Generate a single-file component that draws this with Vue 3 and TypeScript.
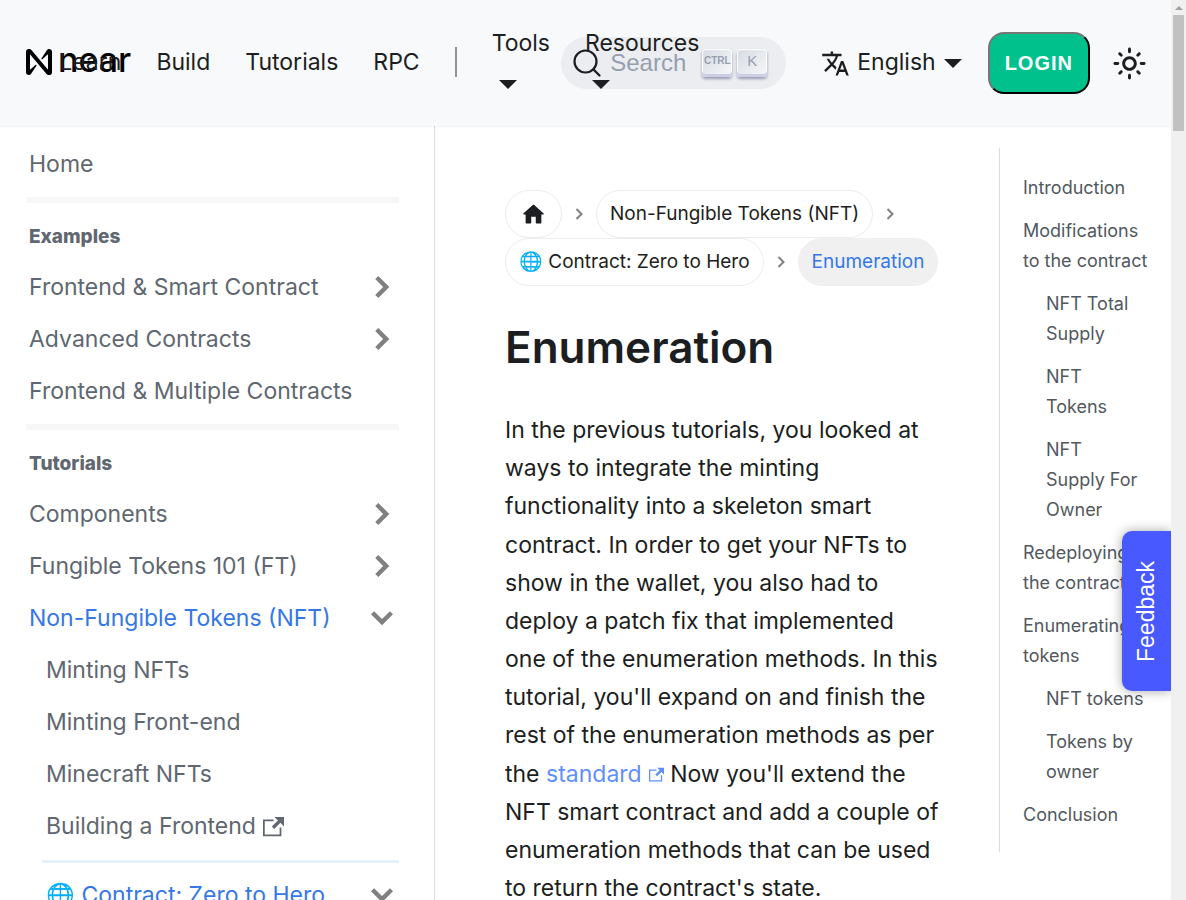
<script setup lang="ts">
interface SideItem {
  kind: 'link' | 'heading' | 'divider' | 'subdivider'
  label?: string
  icon?: 'right' | 'down' | 'external'
  active?: boolean
  nested?: boolean
}

interface TocItem {
  label: string
  nested?: boolean
}

const navLinks: string[] = ['Learn', 'Build', 'Tutorials', 'RPC']
const navMenus: string[] = ['Tools', 'Resources']

const sideItems: SideItem[] = [
  { kind: 'link', label: 'Home' },
  { kind: 'divider' },
  { kind: 'heading', label: 'Examples' },
  { kind: 'link', label: 'Frontend & Smart Contract', icon: 'right' },
  { kind: 'link', label: 'Advanced Contracts', icon: 'right' },
  { kind: 'link', label: 'Frontend & Multiple Contracts' },
  { kind: 'divider' },
  { kind: 'heading', label: 'Tutorials' },
  { kind: 'link', label: 'Components', icon: 'right' },
  { kind: 'link', label: 'Fungible Tokens 101 (FT)', icon: 'right' },
  { kind: 'link', label: 'Non-Fungible Tokens (NFT)', icon: 'down', active: true },
  { kind: 'link', label: 'Minting NFTs', nested: true },
  { kind: 'link', label: 'Minting Front-end', nested: true },
  { kind: 'link', label: 'Minecraft NFTs', nested: true },
  { kind: 'link', label: 'Building a Frontend', icon: 'external', nested: true },
  { kind: 'subdivider' },
  { kind: 'link', label: '🌐 Contract: Zero to Hero', icon: 'down', active: true, nested: true },
]

const tocItems: TocItem[] = [
  { label: 'Introduction' },
  { label: 'Modifications\nto the contract' },
  { label: 'NFT Total\nSupply', nested: true },
  { label: 'NFT\nTokens', nested: true },
  { label: 'NFT\nSupply For\nOwner', nested: true },
  { label: 'Redeploying\nthe contract' },
  { label: 'Enumerating\ntokens' },
  { label: 'NFT tokens', nested: true },
  { label: 'Tokens by\nowner', nested: true },
  { label: 'Conclusion' },
]
</script>

<template>
  <div class="window">
    <div class="page">
      <header class="navbar">
        <nav class="nav-left" aria-label="Main">
          <a class="brand" href="#">
            <svg class="brand-mark" viewBox="0 0 90 90" aria-hidden="true">
              <path d="M72.2 4.6L53.4 32.5c-1.300 1.900 1.200 4.200 3 2.600L74.900 19c.5-.4 1.200-.1 1.200.6v50.300c0 .7-.9 1-1.300.5l-56-67C17 1.200 14.400 0 11.500 0h-2C4.300 0 0 4.300 0 9.600v70.800C0 85.700 4.300 90 9.600 90c3.300 0 6.400-1.700 8.200-4.600l18.800-27.900c1.300-1.900-1.200-4.200-3-2.600L15.100 70.900c-.5.4-1.200.1-1.200-.6V20.100c0-.7.9-1 1.300-.5l56 67c1.800 2.200 4.500 3.400 7.300 3.400h2c5.300 0 9.600-4.300 9.600-9.600V9.600C90 4.300 85.700 0 80.400 0 77.100 0 74 1.700 72.200 4.600z" />
            </svg>
            <span class="brand-name">near</span>
          </a>
          <a v-for="link in navLinks" :key="link" class="nav-link" href="#">{{ link }}</a>
          <span class="nav-rule"></span>
          <a v-for="menu in navMenus" :key="menu" class="nav-menu" href="#">
            <span>{{ menu }}</span>
            <span class="caret-row"><span class="caret"></span></span>
          </a>
        </nav>
        <div class="nav-right">
          <button class="search" type="button">
            <svg class="search-icon" viewBox="0 0 28 28" aria-hidden="true">
              <circle cx="12.5" cy="12.5" r="11" fill="none" stroke="#1c1e21" stroke-width="2.2" />
              <path d="M20.4 20.4L26.5 26.5" stroke="#1c1e21" stroke-width="2.2" stroke-linecap="round" />
            </svg>
            <span class="search-label">Search</span>
            <kbd class="key key-ctrl">CTRL</kbd>
            <kbd class="key">K</kbd>
          </button>
          <a class="language" href="#">
            <svg class="lang-icon" viewBox="0 0 24 24" aria-hidden="true">
              <path fill="currentColor" d="M12.87 15.07l-2.54-2.51.03-.03c1.74-1.94 2.98-4.17 3.71-6.53H17V4h-7V2H8v2H1v1.99h11.17C11.5 7.92 10.44 9.75 9 11.35 8.07 10.32 7.3 9.19 6.69 8h-2c.73 1.63 1.73 3.17 2.98 4.56l-5.09 5.02L4 19l5-5 3.11 3.11.76-2.04zM18.5 10h-2L12 22h2l1.12-3h4.75L21 22h2l-4.5-12zm-2.62 7l1.62-4.33L19.12 17h-3.24z" />
            </svg>
            <span class="language-name">English</span>
            <span class="caret"></span>
          </a>
          <button class="login" type="button">LOGIN</button>
          <button class="theme" type="button" aria-label="Switch theme">
            <svg viewBox="0 0 24 24" aria-hidden="true">
              <path fill="currentColor" d="M12,9c1.65,0,3,1.35,3,3s-1.35,3-3,3s-3-1.35-3-3S10.35,9,12,9 M12,7c-2.76,0-5,2.24-5,5s2.24,5,5,5s5-2.24,5-5 S14.76,7,12,7L12,7z M2,13l2,0c0.55,0,1-0.45,1-1s-0.45-1-1-1l-2,0c-0.55,0-1,0.45-1,1S1.45,13,2,13z M20,13l2,0c0.55,0,1-0.45,1-1 s-0.45-1-1-1l-2,0c-0.55,0-1,0.45-1,1S19.45,13,20,13z M11,2v2c0,0.55,0.45,1,1,1s1-0.45,1-1V2c0-0.55-0.45-1-1-1S11,1.45,11,2z M11,20v2c0,0.55,0.45,1,1,1s1-0.45,1-1v-2c0-0.55-0.45-1-1-1C11.45,19,11,19.45,11,20z M5.99,4.58c-0.39-0.39-1.03-0.39-1.41,0 c-0.39,0.39-0.39,1.03,0,1.41l1.06,1.06c0.39,0.39,1.03,0.39,1.41,0s0.39-1.03,0-1.41L5.99,4.58z M18.36,16.95 c-0.39-0.39-1.03-0.39-1.41,0c-0.39,0.39-0.39,1.03,0,1.41l1.06,1.06c0.39,0.39,1.03,0.39,1.41,0c0.39-0.39,0.39-1.03,0-1.41 L18.36,16.95z M19.42,5.99c0.39-0.39,0.39-1.03,0-1.41c-0.39-0.39-1.03-0.39-1.41,0l-1.06,1.06c-0.39,0.39-0.39,1.03,0,1.41 s1.03,0.39,1.41,0L19.42,5.99z M7.05,18.36c0.39-0.39,0.39-1.03,0-1.41c-0.39-0.39-1.03-0.39-1.41,0l-1.06,1.06 c-0.39,0.39-0.39,1.03,0,1.41s1.03,0.39,1.41,0L7.05,18.36z" />
            </svg>
          </button>
        </div>
      </header>

      <div class="body">
        <aside class="sidebar">
          <template v-for="(item, index) in sideItems" :key="index">
            <hr v-if="item.kind === 'divider'" class="divider" />
            <hr v-else-if="item.kind === 'subdivider'" class="divider sub" />
            <div v-else-if="item.kind === 'heading'" class="side-heading">{{ item.label }}</div>
            <a v-else class="side-link" :class="{ active: item.active, nested: item.nested }" href="#">
              <span>{{ item.label }}</span>
              <svg v-if="item.icon === 'external'" class="external" viewBox="0 0 24 24" aria-hidden="true">
                <path fill="currentColor" d="M21 13v10h-21v-19h12v2h-10v15h17v-8h2zm3-12h-10.988l4.035 4-6.977 7.07 2.828 2.828 6.977-7.07 4.125 4.172v-11z" />
              </svg>
              <svg v-else-if="item.icon" class="chevron" :class="item.icon" viewBox="0 0 24 24" aria-hidden="true">
                <path fill="#808080" d="M8.300 16.300L12.600 12 8.300 7.700 10 6l6 6-6 6z" />
              </svg>
            </a>
          </template>
        </aside>

        <main class="content">
          <nav class="crumbs" aria-label="Breadcrumbs">
            <a class="crumb" href="#" aria-label="Home page">
              <svg class="home-icon" viewBox="0 0 24 24" aria-hidden="true">
                <path fill="currentColor" d="M10 19v-5h4v5c0 .55.45 1 1 1h3c.55 0 1-.45 1-1v-7h1.700c.46 0 .68-.57.33-.87L12.670 3.600c-.38-.34-.96-.34-1.340 0l-8.360 7.530c-.34.3-.13.87.33.87H5v7c0 .55.45 1 1 1h3c.55 0 1-.45 1-1z" />
              </svg>
            </a>
            <svg class="crumb-sep" viewBox="0 0 12 12" aria-hidden="true"><path d="M3.500 1L8.500 6L3.500 11" /></svg>
            <a class="crumb" href="#">Non-Fungible Tokens (NFT)</a>
            <svg class="crumb-sep" viewBox="0 0 12 12" aria-hidden="true"><path d="M3.500 1L8.500 6L3.500 11" /></svg>
            <a class="crumb" href="#">🌐 Contract: Zero to Hero</a>
            <svg class="crumb-sep" viewBox="0 0 12 12" aria-hidden="true"><path d="M3.500 1L8.500 6L3.500 11" /></svg>
            <span class="crumb current">Enumeration</span>
          </nav>
          <h1>Enumeration</h1>
          <p>
            In the previous tutorials, you looked at ways to integrate the minting functionality into a
            skeleton smart contract. In order to get your NFTs to show in the wallet, you also had to deploy
            a patch fix that implemented one of the enumeration methods. In this tutorial, you'll expand on
            and finish the rest of the enumeration methods as per the
            <a class="text-link" href="#">standard<svg class="link-icon" viewBox="0 0 24 24" aria-hidden="true"><path fill="currentColor" d="M21 13v10h-21v-19h12v2h-10v15h17v-8h2zm3-12h-10.988l4.035 4-6.977 7.07 2.828 2.828 6.977-7.07 4.125 4.172v-11z" /></svg></a>
            Now you'll extend the NFT smart contract and add a couple of enumeration methods that can be
            used to return the contract's state.
          </p>
        </main>

        <nav class="toc" aria-label="On this page">
          <ul>
            <li v-for="item in tocItems" :key="item.label" :class="{ nested: item.nested }">
              <a href="#">{{ item.label }}</a>
            </li>
          </ul>
        </nav>
      </div>

      <button class="feedback" type="button">Feedback</button>
    </div>

    <div class="scrollbar" aria-hidden="true">
      <span class="scroll-arrow"></span>
      <span class="scroll-thumb"></span>
    </div>
  </div>
</template>

<style>
html,
body {
  margin: 0;
  overflow: hidden;
}
</style>

<style scoped>
* {
  box-sizing: border-box;
}

.window {
  display: flex;
  height: 100vh;
  overflow: hidden;
  font-family: Inter, "Noto Sans", sans-serif;
  font-size: 23px;
  line-height: 38px;
  color: #1c1e21;
  background: #fff;
}

a {
  color: inherit;
  text-decoration: none;
}

button {
  font-family: inherit;
  color: inherit;
  cursor: pointer;
}

svg {
  display: block;
  flex: none;
}

.page {
  position: relative;
  flex: 1;
  min-width: 0;
  display: flex;
  flex-direction: column;
}

.navbar {
  flex: none;
  position: relative;
  z-index: 2;
  display: flex;
  align-items: center;
  justify-content: space-between;
  height: 126px;
  padding: 0 24px 0 26px;
  background: #f8f9fb;
  box-shadow: 0 1px 2px rgba(0, 0, 0, 0.06);
}

.nav-left {
  position: relative;
  z-index: 1;
  flex: 1;
  min-width: 0;
  display: flex;
  align-items: center;
  gap: 35px;
  padding-bottom: 2px;
}

.brand {
  flex: none;
  display: flex;
  align-items: center;
  gap: 6px;
  margin-right: -107px;
  color: #000;
}

.brand-mark {
  width: 26px;
  height: 26px;
}

.brand-name {
  padding-bottom: 4px;
  font-size: 34px;
  font-weight: 500;
}

.nav-link,
.nav-menu {
  flex: none;
}

.nav-rule {
  flex: none;
  width: 2px;
  height: 30px;
  background: #929396;
}

.nav-menu {
  display: flex;
  flex-direction: column;
}

.caret-row {
  display: flex;
  align-items: center;
  height: 38px;
  padding: 6px 0 0 7px;
}

.caret {
  width: 0;
  border: solid transparent;
  border-width: 9px 9px 0;
  border-top-color: #1c1e21;
}

.nav-right {
  flex: none;
  display: flex;
  align-items: center;
}

.search {
  display: flex;
  align-items: center;
  height: 52px;
  padding: 0 19px 0 12px;
  border: 0;
  border-radius: 26px;
  background: #ebedf0;
}

.search-icon {
  width: 28px;
  height: 28px;
}

.search-label {
  margin: 0 16px 0 9px;
  font-family: "Liberation Sans", Arial, sans-serif;
  font-size: 24px;
  color: #969faf;
}

.key {
  display: flex;
  align-items: center;
  justify-content: center;
  width: 30px;
  height: 28px;
  margin-right: 5px;
  padding-bottom: 4px;
  border-radius: 4px;
  background: linear-gradient(-225deg, #d5dbe4, #f8f8f8);
  box-shadow: inset 0 -3px 0 #cdcde6, inset 0 0 1px 1px #fff, 0 2px 3px rgba(30, 35, 90, 0.4);
  font-family: "Liberation Sans", Arial, sans-serif;
  font-size: 15px;
  line-height: 20px;
  color: #969faf;
}

.key:last-child {
  margin-right: 0;
}

.key-ctrl {
  font-size: 10px;
  font-weight: 700;
}

.language {
  display: flex;
  align-items: center;
  margin: 0 26px 0 35px;
}

.language-name {
  padding-bottom: 2px;
}

.lang-icon {
  width: 29px;
  height: 29px;
  margin-right: 7px;
}

.language .caret {
  margin-left: 8px;
}

.login {
  height: 62px;
  padding: 0 15px;
  border: 2px outset #1c1e21;
  border-color: #767676 #1c1e21 #1c1e21 #767676;
  border-radius: 16px;
  background: #00c08b;
  font-family: "Liberation Sans", Arial, sans-serif;
  font-size: 20px;
  font-weight: 700;
  letter-spacing: 1px;
  color: #fff;
}

.theme {
  margin-left: 22px;
  padding: 0;
  border: 0;
  background: none;
}

.theme svg {
  width: 35px;
  height: 35px;
}

.body {
  flex: 1;
  min-height: 0;
  display: flex;
  overflow: hidden;
}

.sidebar {
  flex: none;
  width: 435px;
  padding: 12px 35px 0 26px;
  border-right: 1px solid #dadde1;
  color: #606770;
  overflow: hidden;
}

.side-link {
  display: flex;
  align-items: center;
  height: 52px;
  padding-left: 3px;
}

.side-link.nested {
  padding-left: 20px;
}

.side-link.active {
  color: #3578e5;
}

.side-heading {
  padding: 10px 0 0 3px;
  font-size: 19px;
  font-weight: 800;
  line-height: 48px;
}

.divider {
  height: 6px;
  margin: 7px 0 0;
  border: 0;
  background: #f7f7f7;
}

.divider.sub {
  height: 3px;
  margin: 8px 0 6px 16px;
  background: #e7f1fb;
}

.external {
  width: 21px;
  height: 21px;
  margin-left: 7px;
}

.chevron {
  width: 44px;
  height: 44px;
  margin: 0 -5px 0 auto;
}

.chevron.down {
  transform: rotate(90deg);
}

.content {
  flex: 1;
  min-width: 0;
  padding: 64px 59px 0 70px;
}

.crumbs {
  display: flex;
  flex-wrap: wrap;
  align-items: center;
}

.crumb {
  display: flex;
  align-items: center;
  justify-content: center;
  min-width: 57px;
  height: 48px;
  padding: 0 13px;
  border: 1px solid #ebedf0;
  border-radius: 24px;
  font-size: 19px;
}

.crumb.current {
  border-color: #f0f0f0;
  background: #f0f0f0;
  color: #3578e5;
}

.home-icon {
  width: 27px;
  height: 27px;
}

.crumb-sep {
  width: 12px;
  height: 12px;
  margin: 0 11px;
  fill: none;
  stroke: #808080;
  stroke-width: 2;
}

h1 {
  margin: 33px 0 36px;
  font-size: 44px;
  font-weight: 600;
  line-height: 56px;
}

p {
  margin: 0;
  line-height: 1.66;
}

.text-link {
  color: #5f8ffa;
}

.link-icon {
  display: inline-block;
  width: 15px;
  height: 15px;
  margin-left: 7px;
}

.toc {
  flex: none;
  width: 172px;
  padding-top: 22px;
}

.toc ul {
  margin: 0;
  padding: 25px 12px 22px 23px;
  border-left: 1px solid #dadde1;
  list-style: none;
  font-size: 18px;
  line-height: 30px;
  color: #525860;
  white-space: pre-line;
}

.toc li + li {
  margin-top: 13px;
}

.toc .nested {
  padding-left: 23px;
}

.feedback {
  position: absolute;
  z-index: 3;
  right: 0;
  top: 531px;
  width: 49px;
  height: 160px;
  padding: 0;
  border: 0;
  border-radius: 0 10px 10px 0;
  background: #485aff;
  box-shadow: 0 0 12px rgba(0, 0, 0, 0.35);
  font-family: "Liberation Sans", Arial, sans-serif;
  font-size: 23px;
  color: #fff;
  writing-mode: vertical-rl;
  transform: rotate(180deg);
}

.scrollbar {
  position: relative;
  z-index: 4;
  flex: none;
  display: flex;
  flex-direction: column;
  align-items: center;
  width: 15px;
  background: #f0f0f0;
}

.scroll-arrow {
  height: 15px;
  padding-top: 6px;
}

.scroll-arrow::before {
  content: "";
  display: block;
  border: solid transparent;
  border-width: 0 4px 4px;
  border-bottom-color: #a0a0a0;
}

.scroll-thumb {
  width: 11px;
  height: 116px;
  background: #c1c1c1;
}
</style>
